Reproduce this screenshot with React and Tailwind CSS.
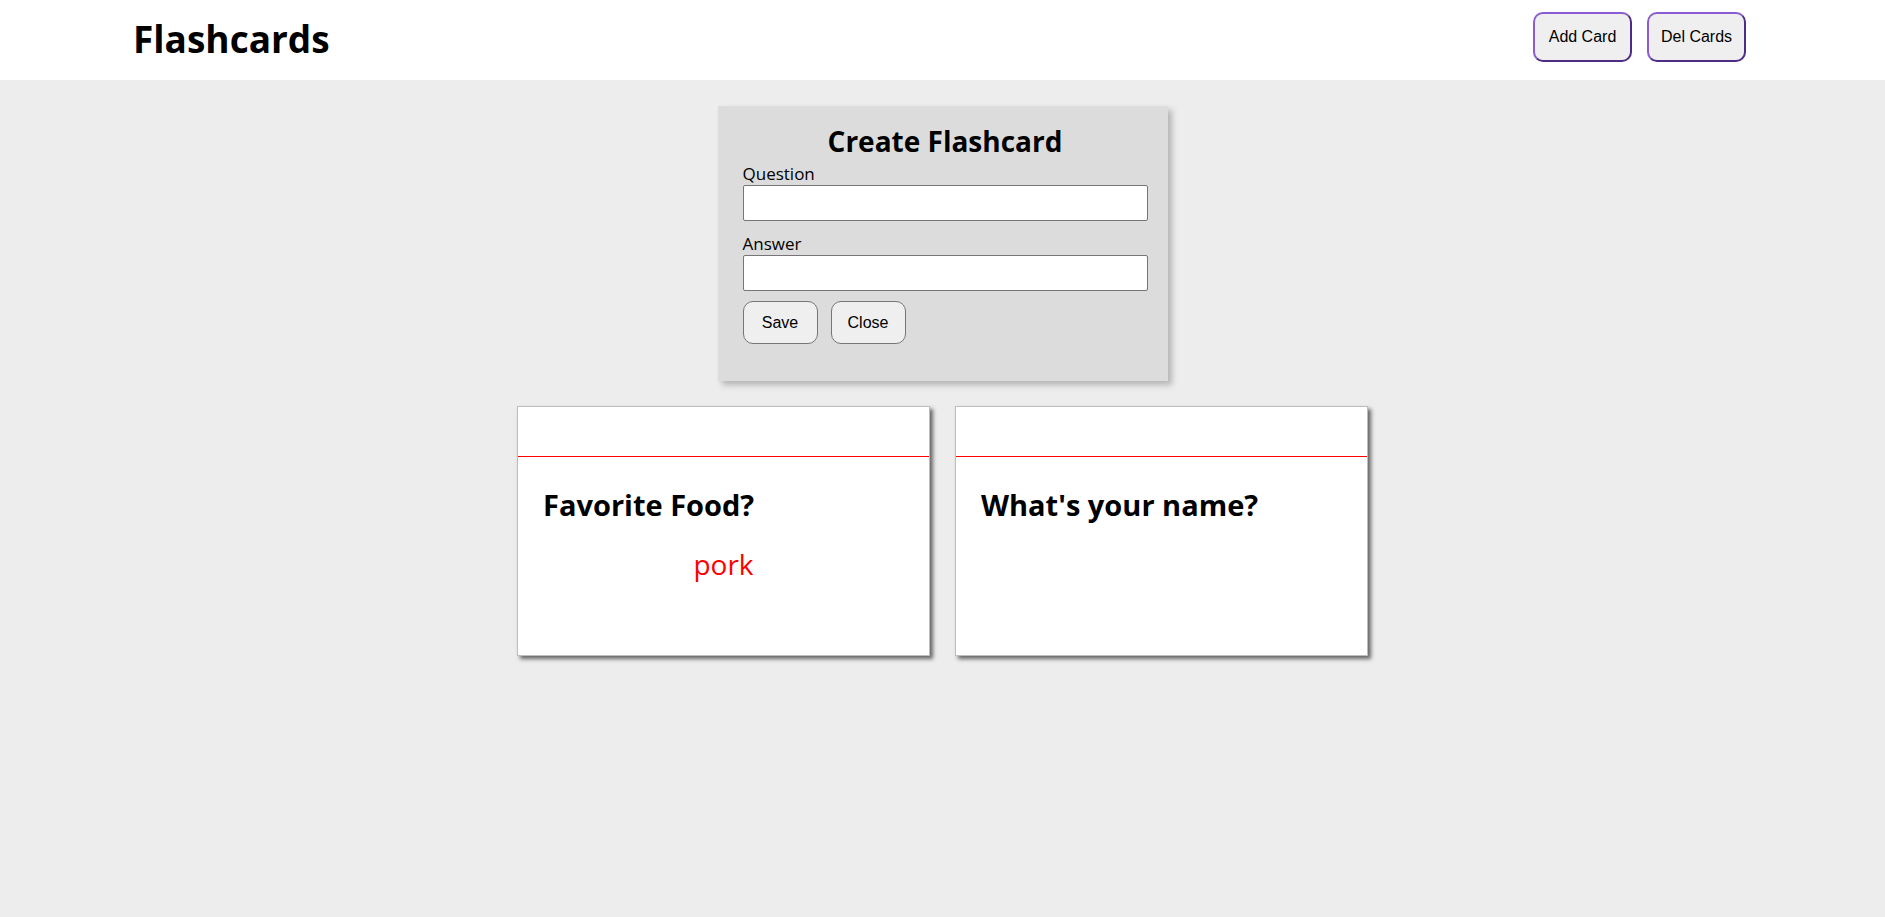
import { useState } from 'react';

const font = { fontFamily: '"Open Sans", "Noto Sans", sans-serif' };
const btnFont = { fontFamily: '"Liberation Sans", Arial, sans-serif' };

const cards = [
  { id: 1, question: 'Favorite Food?', answer: 'pork', showAnswer: true },
  { id: 2, question: "What's your name?", answer: 'Jim', showAnswer: false },
];

function Flashcard({ card }) {
  return (
    <div className="w-[413px] h-[250px] bg-white border border-[#bdbdbd] shadow-[3px_3px_4px_#666666] flex flex-col">
      <div className="h-[50px] border-b border-[#ff0000]" />
      <div className="px-[25px] pt-[28px]">
        <h2 className="text-[29px] font-bold text-black leading-[40px]">{card.question}</h2>
        {card.showAnswer && <p className="text-[28px] text-[#ff0000] text-center leading-[40px] mt-[19px]">{card.answer}</p>}
      </div>
    </div>
  );
}

export default function App() {
  const [question, setQuestion] = useState('');
  const [answer, setAnswer] = useState('');

  return (
    <div className="min-h-[917px] bg-[#ededed]" style={font}>
      <header className="h-[80px] bg-white flex items-start justify-between pl-[133px] pr-[139px]">
        <h1 className="text-[37px] font-bold text-black leading-[78px]">Flashcards</h1>
        <div className="flex gap-[15px] pt-[12px]">
          <button className="w-[99px] h-[50px] rounded-[10px] bg-[#efefef] border-2 border-[#8a5bd1] border-r-[#4e2c86] border-b-[#4e2c86] text-[16px] text-black" style={btnFont}>Add Card</button>
          <button className="w-[99px] h-[50px] rounded-[10px] bg-[#efefef] border-2 border-[#8a5bd1] border-r-[#4e2c86] border-b-[#4e2c86] text-[16px] text-black" style={btnFont}>Del Cards</button>
        </div>
      </header>

      <main className="flex flex-col items-center pt-[26px]">
        <div className="w-[450px] h-[275px] bg-[#dcdcdc] shadow-[4px_4px_6px_#b5b5b5] pl-[25px] pr-[20px] pt-[14px]">
          <h2 className="text-[28px] font-bold text-black text-center leading-[42px]">Create Flashcard</h2>
          <label className="block text-[17px] leading-[23px] text-black">Question</label>
          <input value={question} onChange={(e) => setQuestion(e.target.value)} className="block w-[405px] h-[36px] bg-white border border-[#767676] rounded-[2px] px-2" />
          <label className="block text-[17px] leading-[23px] text-black mt-[11px]">Answer</label>
          <input value={answer} onChange={(e) => setAnswer(e.target.value)} className="block w-[405px] h-[36px] bg-white border border-[#767676] rounded-[2px] px-2" />
          <div className="flex gap-[13px] mt-[10px]" style={btnFont}>
            <button className="w-[75px] h-[43px] rounded-[10px] bg-[#efefef] border border-[#767676] text-[16px] text-black">Save</button>
            <button className="w-[75px] h-[43px] rounded-[10px] bg-[#efefef] border border-[#767676] text-[16px] text-black">Close</button>
          </div>
        </div>

        <div className="flex gap-[25px] mt-[25px]">
          {cards.map((c) => <Flashcard key={c.id} card={c} />)}
        </div>
      </main>
    </div>
  );
}
